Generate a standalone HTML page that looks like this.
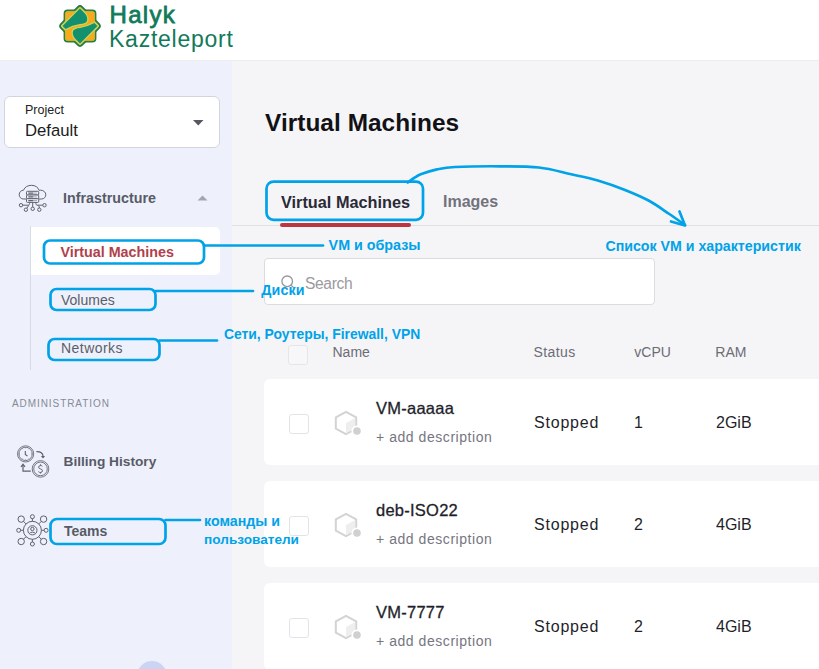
<!DOCTYPE html>
<html><head><meta charset="utf-8">
<style>
html,body{margin:0;padding:0}
body{width:819px;height:669px;overflow:hidden;position:relative;background:#f5f5f7;font-family:"Liberation Sans",sans-serif}
.a{position:absolute}
.t{position:absolute;line-height:1;white-space:nowrap}
.hdr{left:0;top:0;width:819px;height:60px;background:#fff;border-bottom:1px solid #ececee}
.side{left:0;top:61px;width:232px;height:608px;background:#eef1fb}
.card{position:absolute;left:264px;width:600px;height:86px;background:#fff;border-radius:6px}
.cb{position:absolute;width:18px;height:18px;border:1px solid #e3e3e9;border-radius:3px;background:#fff}
.nm{font-size:16.5px;color:#1f1f2b;-webkit-text-stroke:0.3px #1f1f2b;letter-spacing:.25px}
.ds{font-size:14px;color:#76767f;letter-spacing:.55px}
.cell{font-size:16px;color:#1f1f2b}
.ann{font-weight:bold;color:#00a2e8}
</style></head><body>

<div class="a hdr"></div>
<!-- logo -->
<svg class="a" style="left:58px;top:4px" width="44" height="44" viewBox="0 0 44 44">
  <g transform="translate(22,22)">
    <rect x="-14.6" y="-14.6" width="29.2" height="29.2" rx="2.2" fill="#1f7d45" stroke="#1f7d45" stroke-width="3.6"/>
    <rect x="-14" y="-14" width="28" height="28" rx="2.2" fill="#1f7d45" stroke="#1f7d45" stroke-width="3.6" transform="rotate(45)"/>
    <rect x="-14.6" y="-14.6" width="29.2" height="29.2" rx="2.2" fill="#f7aa1c" stroke="#b9c94f" stroke-width="0.6"/>
    <rect x="-14" y="-14" width="28" height="28" rx="2.2" fill="#f7aa1c" transform="rotate(45)"/>
    <rect x="-14.6" y="-14.6" width="29.2" height="29.2" rx="2.2" fill="#f7aa1c"/>
    <path d="M-14.6,3.8 L-18.4,0 L0,-18.4 L4.9,-13.5 C7.8,-10.8 8.6,-6.5 7.2,-4.2 C6,-2.4 3,-1.6 0,-1.3 C-5,-0.6 -10,1.2 -14.6,3.8 Z" fill="#13906e" stroke="#c8d55e" stroke-width="1.3" stroke-linejoin="round"/>
    <path d="M14.6,-3.8 L18.4,0 L0,18.4 L-4.9,13.5 C-7.8,10.8 -8.6,6.5 -7.2,4.2 C-6,2.4 -3,1.6 0,1.3 C5,0.6 10,-1.2 14.6,-3.8 Z" fill="#13906e" stroke="#c8d55e" stroke-width="1.3" stroke-linejoin="round"/>
  </g>
</svg>
<div class="t" style="left:109.5px;top:2.8px;font-size:24px;color:#127a5a;-webkit-text-stroke:0.8px #127a5a;letter-spacing:1.3px">Halyk</div>
<div class="t" style="left:109px;top:28.4px;font-size:23px;color:#127a5a;letter-spacing:.75px">Kazteleport</div>

<!-- sidebar -->
<div class="a side"></div>
<div class="a" style="left:4px;top:96px;width:214px;height:50px;background:#fff;border:1px solid #d3d5dc;border-radius:6px"></div>
<div class="t" style="left:25px;top:104.2px;font-size:12.5px;color:#222">Project</div>
<div class="t" style="left:25px;top:122.9px;font-size:16.7px;color:#1c1c22">Default</div>
<svg class="a" style="left:193px;top:120px" width="11" height="6" viewBox="0 0 11 6"><path d="M0,0 L10.5,0 L5.25,5.5 Z" fill="#555862"/></svg>

<!-- infrastructure icon -->
<svg class="a" style="left:17px;top:182px" width="32" height="32" viewBox="0 0 32 32" fill="none" stroke="#5f626c" stroke-width="1">
  <path d="M9.5,17 H6.3 C4,17 2.2,15.1 2.2,12.6 C2.2,10.2 4,8.3 6.5,8.2 C7.6,5.1 10.8,3.3 14.5,3.3 C18.2,3.3 21,5.2 22.2,8.4 C22.7,8.3 23.1,8.2 23.6,8.2 C26.6,8.2 28.8,10.3 28.8,12.8 C28.8,15.1 27,17 24.6,17 H21.7"/>
  <rect x="9.5" y="9.3" width="12.2" height="3.7" rx="0.9" fill="#eef1fb"/>
  <rect x="9.5" y="13" width="12.2" height="3.7" rx="0.9" fill="#eef1fb"/>
  <rect x="9.5" y="16.7" width="12.2" height="3.7" rx="0.9" fill="#eef1fb"/>
  <path d="M11.3,11.15 H16.2 M11.3,14.85 H16.2 M11.3,18.55 H16.2" stroke-width="1.3"/>
  <path d="M16.2,11.15 H19.9 M16.2,14.85 H19.9 M16.2,18.55 H19.9" stroke-width="1" stroke="#a9acb4"/>
  <path d="M5.8,23.2 H11 C12,23.2 12.6,22.4 12.6,21.5 V20.4 M25.7,23.2 H20.5 C19.5,23.2 18.9,22.4 18.9,21.5 V20.4 M15.7,20.4 V25.1 M9.8,26.2 L11.8,23.3 M22.3,26 V24.8 L20.7,23.2"/>
  <circle cx="4" cy="23.2" r="1.7"/><circle cx="27.5" cy="23.2" r="1.7"/>
  <circle cx="8.9" cy="27.7" r="1.7"/><circle cx="15.7" cy="26.8" r="1.7"/><circle cx="22.3" cy="27.7" r="1.7"/>
</svg>
<div class="t" style="left:63px;top:190.9px;font-size:14.3px;font-weight:bold;color:#585b67">Infrastructure</div>
<svg class="a" style="left:197px;top:195px" width="11" height="6" viewBox="0 0 11 6"><path d="M0.5,5.5 L10.5,5.5 L5.5,0.5 Z" fill="#a3a6b1"/></svg>

<div class="a" style="left:30px;top:226px;width:1px;height:144px;background:#d8dae4"></div>
<div class="a" style="left:31px;top:227px;width:189px;height:48px;background:#fff;border-radius:0 5px 5px 0"></div>
<div class="t" style="left:60.5px;top:244.6px;font-size:14.3px;font-weight:bold;color:#b1404b">Virtual Machines</div>
<div class="t" style="left:61px;top:293.3px;font-size:14px;color:#5b5e6a">Volumes</div>
<div class="t" style="left:61px;top:341.4px;font-size:14px;color:#5b5e6a;letter-spacing:.45px">Networks</div>

<div class="t" style="left:12px;top:398.6px;font-size:10px;letter-spacing:0.93px;color:#878a96">ADMINISTRATION</div>

<!-- billing icon -->
<svg class="a" style="left:15px;top:443px" width="36" height="36" viewBox="0 0 36 36" fill="none" stroke="#5f626c" stroke-width="0.85">
  <circle cx="10.6" cy="10.9" r="8.1"/><circle cx="10.6" cy="10.9" r="6.7"/>
  <path d="M10.3,8 V11.4 L12.4,13" stroke-width="1.1"/>
  <path d="M10.6,4.6 V5.3 M10.6,16.5 V17.2 M4.3,10.9 H5 M16.2,10.9 H16.9 M7.4,5.6 L7.7,6.1 M13.8,5.6 L13.5,6.1 M7.4,16.2 L7.7,15.7 M13.8,16.2 L13.5,15.7" stroke-width="0.8"/>
  <path d="M21.4,8.7 C24,8.6 27.6,9 28.1,13.2" stroke-width="1.2"/><path d="M25.9,13 L30.1,13 L28,15.6 Z" fill="#5f626c" stroke="none"/>
  <circle cx="25.5" cy="25.9" r="8.3"/><circle cx="25.5" cy="25.9" r="6.8"/>
  <path d="M27.4,23.2 C26.8,22.3 23.6,22.2 23.6,24.2 C23.6,26.4 27.5,25.5 27.5,27.8 C27.5,29.8 24.3,29.8 23.4,28.7 M25.5,21.3 V22.5 M25.5,29.4 V30.6" stroke-width="1"/>
  <path d="M15.8,28.1 H8 V22" stroke-width="1.2"/><path d="M6,23.9 L8,21.3 L10,23.9" stroke-width="1.2"/>
</svg>
<div class="t" style="left:63.5px;top:454.6px;font-size:13.7px;font-weight:bold;color:#585b67">Billing History</div>

<!-- teams icon -->
<svg class="a" style="left:16px;top:514px" width="34" height="34" viewBox="0 0 34 34" fill="none" stroke="#5f626c" stroke-width="1">
  <circle cx="16.4" cy="16.3" r="9"/>
  <circle cx="16.4" cy="16.3" r="4.6"/>
  <circle cx="16.4" cy="15" r="1.7"/>
  <path d="M13.4,19.5 C14.2,17.8 18.6,17.8 19.4,19.5"/>
  <circle cx="5.2" cy="5.1" r="3.2"/><circle cx="27.6" cy="5.1" r="3.2"/><circle cx="5.2" cy="27.5" r="3.2"/><circle cx="27.6" cy="27.5" r="3.2"/>
  <circle cx="16.4" cy="2.7" r="2"/><circle cx="16.4" cy="30" r="2"/><circle cx="2.7" cy="16.3" r="2"/><circle cx="30.1" cy="16.3" r="2"/>
  <path d="M7.5,7.4 L10,9.9 M25.3,7.4 L22.8,9.9 M7.5,25.2 L10,22.7 M25.3,25.2 L22.8,22.7 M16.4,4.7 V7.3 M16.4,25.3 V28 M4.7,16.3 H7.4 M25.4,16.3 H28.1"/>
</svg>
<div class="t" style="left:64px;top:524.4px;font-size:14px;font-weight:bold;color:#585b67">Teams</div>

<div class="a" style="left:137px;top:661px;width:30px;height:30px;border-radius:50%;background:#ccd4f4"></div>

<!-- main -->
<div class="t" style="left:265px;top:110.5px;font-size:24.4px;letter-spacing:.05px;font-weight:bold;color:#111116">Virtual Machines</div>
<div class="a" style="left:232px;top:225px;width:587px;height:1px;background:#e0e0e4"></div>
<div class="t" style="left:281px;top:193.5px;font-size:16.3px;font-weight:bold;color:#2a2a36">Virtual Machines</div>
<div class="t" style="left:443px;top:194.2px;font-size:16px;font-weight:bold;color:#72727c">Images</div>
<div class="a" style="left:280px;top:223px;width:131px;height:4px;border-radius:2px;background:#bc3641"></div>

<div class="a" style="left:264px;top:258px;width:389px;height:45px;background:#fff;border:1px solid #dcdce0;border-radius:4px"></div>
<svg class="a" style="left:280px;top:273px" width="20" height="20" viewBox="0 0 20 20" fill="none" stroke="#96969e" stroke-width="1.3"><circle cx="7.2" cy="8.3" r="5.3"/><path d="M11,12.1 L14,15"/></svg>
<div class="t" style="left:305px;top:275.5px;font-size:15.6px;letter-spacing:-0.35px;color:#9a9aa1">Search</div>

<div class="cb" style="left:288px;top:345px;background:#f7f7f9;border-color:#e6e6ea"></div>
<div class="t" style="left:332.5px;top:345.15px;font-size:14px;color:#6c6c76">Name</div>
<div class="t" style="left:533.5px;top:345.15px;font-size:14px;color:#6c6c76;letter-spacing:.4px">Status</div>
<div class="t" style="left:634.3px;top:345.15px;font-size:14px;color:#6c6c76">vCPU</div>
<div class="t" style="left:715.3px;top:345.15px;font-size:14px;color:#6c6c76">RAM</div>

<!-- rows -->
<div class="card" style="top:379px"></div>
<div class="card" style="top:481px"></div>
<div class="card" style="top:583px;height:87px"></div>

<svg width="0" height="0" style="position:absolute"><defs>
<g id="vmi">
  <path d="M12,1.8 L22.2,7.3 V18.7 L12,24.2 L1.8,18.7 V7.3 Z" fill="none" stroke="#d3d3d5" stroke-width="2" stroke-linejoin="round"/>
  <path d="M12,13 L21.2,8 V18.2 L12,23.2 Z" fill="#eeeeef"/>
  <circle cx="23" cy="21" r="5.6" fill="#fff"/>
  <circle cx="23" cy="21" r="3.8" fill="#d0d0d2"/>
</g></defs></svg>

<div class="cb" style="left:289px;top:414px"></div>
<svg class="a" style="left:334px;top:410px" width="30" height="30"><use href="#vmi"/></svg>
<div class="t nm" style="left:376px;top:399.9px">VM-aaaaa</div>
<div class="t ds" style="left:376px;top:429.85px">+ add description</div>
<div class="t cell" style="left:534px;top:415.3px;letter-spacing:.8px">Stopped</div>
<div class="t cell" style="left:634px;top:415.3px">1</div>
<div class="t cell" style="left:716px;top:415.3px">2GiB</div>

<div class="cb" style="left:289px;top:516px"></div>
<svg class="a" style="left:334px;top:512px" width="30" height="30"><use href="#vmi"/></svg>
<div class="t nm" style="left:376px;top:501.9px">deb-ISO22</div>
<div class="t ds" style="left:376px;top:531.85px">+ add description</div>
<div class="t cell" style="left:534px;top:517.3px;letter-spacing:.8px">Stopped</div>
<div class="t cell" style="left:634px;top:517.3px">2</div>
<div class="t cell" style="left:716px;top:517.3px">4GiB</div>

<div class="cb" style="left:289px;top:618px"></div>
<svg class="a" style="left:334px;top:614px" width="30" height="30"><use href="#vmi"/></svg>
<div class="t nm" style="left:376px;top:603.9px">VM-7777</div>
<div class="t ds" style="left:376px;top:633.85px">+ add description</div>
<div class="t cell" style="left:534px;top:619.3px;letter-spacing:.8px">Stopped</div>
<div class="t cell" style="left:634px;top:619.3px">2</div>
<div class="t cell" style="left:716px;top:619.3px">4GiB</div>

<!-- annotations -->
<svg class="a" style="left:0;top:0" width="819" height="669" viewBox="0 0 819 669" fill="none" stroke="#00a2e8" stroke-width="2.7" stroke-linecap="round" stroke-linejoin="round">
  <rect x="44" y="240.5" width="160" height="23" rx="6"/>
  <path d="M204,245.5 H323"/>
  <rect x="50.5" y="289" width="105" height="21" rx="6"/>
  <path d="M155.5,291 H253"/>
  <rect x="48.5" y="339" width="111" height="21" rx="6"/>
  <path d="M159.5,340.5 H217"/>
  <rect x="50.5" y="519" width="115" height="25" rx="6.5"/>
  <path d="M165.5,520 H200"/>
  <rect x="266.5" y="181.6" width="156.5" height="38.2" rx="7"/>
  <path d="M407.8,182.5 C408.8,181.8 411.7,179.4 414.0,178.0 C416.3,176.6 417.6,175.4 421.4,174.0 C425.2,172.6 431.4,170.6 437.0,169.4 C442.6,168.2 444.5,167.5 455.0,167.0 C465.5,166.5 486.0,166.2 500.0,166.3 C514.0,166.4 527.3,166.2 539.0,167.5 C550.7,168.8 560.2,171.8 570.0,174.0 C579.8,176.2 588.6,177.8 597.8,180.5 C607.0,183.2 616.5,186.6 625.0,190.0 C633.5,193.4 641.6,196.8 649.0,200.8 C656.4,204.8 663.3,210.0 669.3,214.0 C675.3,218.0 682.4,223.2 685.0,225.0"/>
  <path d="M679.5,211.5 L685,225.5 L671,221.5"/>
</svg>
<div class="t ann" style="left:328.6px;top:238.1px;font-size:14.3px">VM и образы</div>
<div class="t ann" style="left:261.2px;top:283.1px;font-size:14.3px;letter-spacing:.15px">Диски</div>
<div class="t ann" style="left:223.9px;top:328px;font-size:13.9px">Сети, Роутеры, Firewall, VPN</div>
<div class="t ann" style="left:605.4px;top:238.5px;font-size:14.2px">Список VM и характеристик</div>
<div class="t ann" style="left:204.1px;top:513.5px;font-size:14.2px">команды и</div>
<div class="t ann" style="left:204.1px;top:533.1px;font-size:13.6px">пользователи</div>

</body></html>
